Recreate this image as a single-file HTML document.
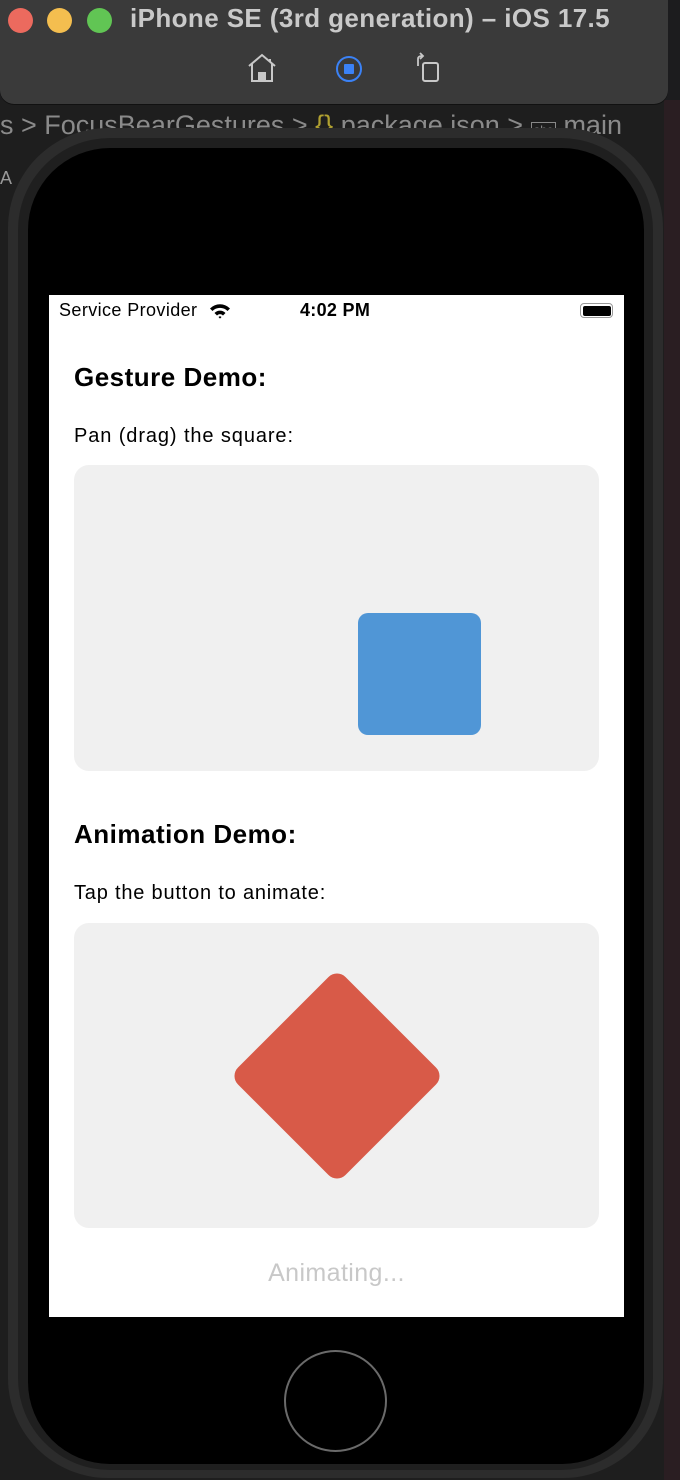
<!DOCTYPE html>
<html><head><meta charset="utf-8"><style>
*{margin:0;padding:0;box-sizing:border-box}
body{width:680px;height:1480px;background:#1c1c1e;position:relative;overflow:hidden;font-family:"Liberation Sans",sans-serif}
.abs{position:absolute}
</style></head><body>
<div class="abs" style="left:0;top:100px;width:680px;height:1380px;background:#1e1e1e"></div>
<div class="abs" style="left:664px;top:100px;width:16px;height:1380px;background:#2a1e22"></div>
<div class="abs" style="left:0;top:110px;color:#8a8a8a;font-size:27px;white-space:nowrap">s &gt; FocusBearGestures &gt; <span style="color:#b0a030">{}</span> package.json &gt; <span style="border:1px solid #888;font-size:12px;padding:0 2px">abc</span> main</div>
<div class="abs" style="left:0;top:168px;color:#999;font-size:18px">A</div>
<div class="abs" style="left:0;top:0;width:668px;height:104px;background:#3a3a3a;border-radius:0 0 14px 14px;box-shadow:0 1px 0 #111"></div>
<div class="abs" style="left:8px;top:8px;width:25px;height:25px;border-radius:50%;background:#ec6a5e"></div>
<div class="abs" style="left:47px;top:8px;width:25px;height:25px;border-radius:50%;background:#f4be4f"></div>
<div class="abs" style="left:87px;top:8px;width:25px;height:25px;border-radius:50%;background:#61c554"></div>
<div class="abs" style="left:130px;top:3px;color:#c9c9c9;font-size:26px;font-weight:bold;white-space:nowrap;letter-spacing:0.4px">iPhone SE (3rd generation) – iOS 17.5</div>
<svg class="abs" style="left:244px;top:52px" width="36" height="32" viewBox="0 0 36 32"><path d="M5 14 L18 3 L31 14 M8 12 V29 H28 V12 M15 29 V21 H21 V29 M26 7 V10" fill="none" stroke="#c8c8c8" stroke-width="2"/><rect x="15" y="21" width="6" height="8" fill="#c8c8c8"/></svg>
<div class="abs" style="left:336px;top:56px;width:26px;height:26px;border-radius:50%;border:2.5px solid #3b82f6"></div>
<div class="abs" style="left:344px;top:64px;width:10px;height:10px;background:#3b82f6;border-radius:1px"></div>
<svg class="abs" style="left:414px;top:52px" width="30" height="32" viewBox="0 0 30 32"><rect x="9" y="11" width="15" height="18" rx="2" fill="none" stroke="#c8c8c8" stroke-width="2"/><path d="M4 14 V7 Q4 4 8 4 M6 1 L9 4 L6 7" fill="none" stroke="#c8c8c8" stroke-width="1.8"/></svg>
<div class="abs" style="left:8px;top:128px;width:655px;height:1350px;background:#2c2c2c;border-radius:100px"></div>
<div class="abs" style="left:18px;top:138px;width:635px;height:1332px;background:#1f1f1f;border-radius:92px"></div>
<div class="abs" style="left:28px;top:148px;width:616px;height:1316px;background:#000;border-radius:82px"></div>
<div class="abs" style="left:49px;top:295px;width:575px;height:1022px;background:#fff">
 <div class="abs" style="left:10px;top:5px;font-size:18px;letter-spacing:0.4px;color:#000">Service Provider</div>
 <svg class="abs" style="left:160px;top:8px" width="22" height="16" viewBox="0 0 22 16"><path d="M1 5.5 A14 14 0 0 1 21 5.5 L18.5 8 A10.5 10.5 0 0 0 3.5 8 Z M5.5 10 A7.5 7.5 0 0 1 16.5 10 L14 12.5 A4 4 0 0 0 8 12.5 Z M9.5 14 A2 2 0 0 1 12.5 14 L11 15.6 Z" fill="#000"/></svg>
 <div class="abs" style="left:251px;top:5px;font-size:18px;font-weight:bold;letter-spacing:0.3px;color:#000">4:02 PM</div>
 <div class="abs" style="left:531px;top:8px;width:33px;height:15px;border:1.5px solid #999;border-radius:4px;padding:1.5px"><div style="width:100%;height:100%;background:#000;border-radius:2px"></div></div>
 <div class="abs" style="left:25px;top:67px;font-size:26px;font-weight:bold;letter-spacing:0.5px;color:#000">Gesture Demo:</div>
 <div class="abs" style="left:25px;top:130px;font-size:20px;letter-spacing:0.9px;color:#000">Pan (drag) the square:</div>
 <div class="abs" style="left:25px;top:170px;width:525px;height:306px;background:#f0f0f0;border-radius:15px"></div>
 <div class="abs" style="left:309px;top:318px;width:123px;height:122px;background:#5096d6;border-radius:10px"></div>
 <div class="abs" style="left:25px;top:524px;font-size:26px;font-weight:bold;letter-spacing:0.5px;color:#000">Animation Demo:</div>
 <div class="abs" style="left:25px;top:587px;font-size:20px;letter-spacing:0.8px;color:#000">Tap the button to animate:</div>
 <div class="abs" style="left:25px;top:628px;width:525px;height:305px;background:#f0f0f0;border-radius:15px"></div>
 <div class="abs" style="left:211.5px;top:704.5px;width:152px;height:152px;background:#d85a48;border-radius:12px;transform:rotate(45deg)"></div>
 <div class="abs" style="left:0;top:964px;width:575px;text-align:center;font-size:25px;letter-spacing:0.4px;color:#c8c8c8">Animating...</div>
</div>
<div class="abs" style="left:284px;top:1350px;width:103px;height:102px;border-radius:50%;border:2.5px solid #6a6a6a"></div>
</body></html>
